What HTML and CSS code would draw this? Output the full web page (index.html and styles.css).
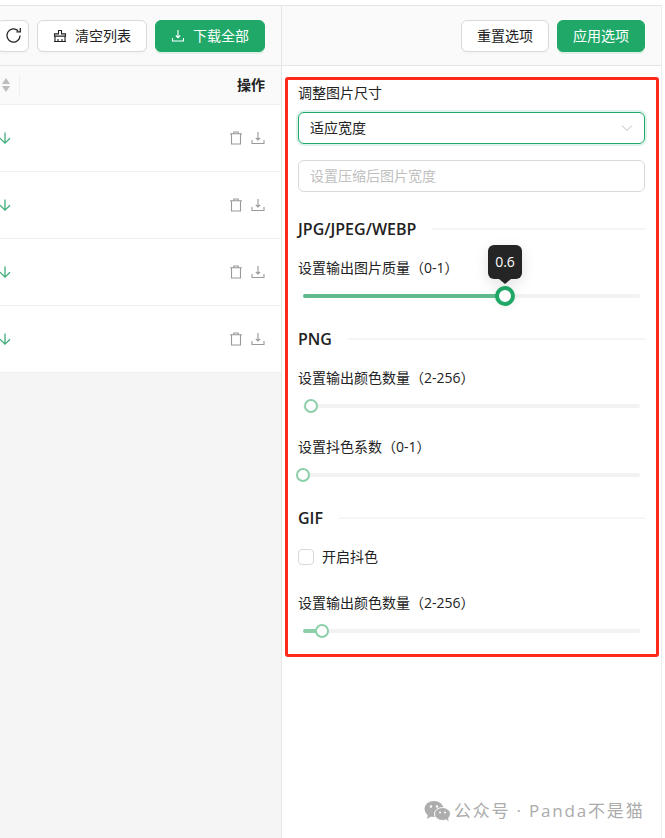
FILE: index.html
```html
<!DOCTYPE html>
<html lang="zh-CN">
<head>
<meta charset="utf-8">
<title>图片压缩</title>
<link rel="stylesheet" href="styles.css">
</head>
<body>
<div class="app">
  <section class="left">
    <div class="toolbar">
      <button class="btn icon-btn"><svg width="17" height="17" viewBox="0 0 16 16" class="ico"><path d="M14.200 8a6.200 6.200 0 1 1-1.900-4.500" fill="none" stroke="#222" stroke-width="1.200"/><path d="M14.400 .9v3.700h-3.700" fill="none" stroke="#222" stroke-width="1.200"/></svg></button>
      <button class="btn"><svg width="14" height="14" viewBox="0 0 14 14" class="ico"><path d="M5.500 1.500h3v3.400h4v2.200h-11V4.900h4zM2 7.100v5.400h10V7.100M1 12.500h12M5 10v2.500M9 10v2.500" fill="none" stroke="#222" stroke-width="1.100"/></svg>清空列表</button>
      <button class="btn primary"><svg width="14" height="14" viewBox="0 0 14 14" class="ico"><path d="M7 1v7.500M4.800 6.500 7 8.700l2.200-2.200M1.500 9v3h11V9" fill="none" stroke="#fff" stroke-width="1.100"/></svg>下载全部</button>
    </div>
    <div class="thead">
      <div class="sort"><span class="up"></span><span class="down"></span></div>
      <div class="th-sep"></div>
      <div class="th-action">操作</div>
    </div>
    <div class="row"><svg class="status" width="14" height="14" viewBox="0 0 14 14"><path d="M7 1.500v10.500M2 7.200 7 12.200l5-5" fill="none" stroke="#3fae7a" stroke-width="1.300"/></svg><div class="actions"><svg width="14" height="14" viewBox="0 0 14 14"><path d="M1 2.800h12M4.800 2.800V1h4.400v1.800M2.500 2.800v10.200h9V2.800" fill="none" stroke="#999" stroke-width="1.100"/></svg><svg width="14" height="14" viewBox="0 0 14 14"><path d="M7 1v8M4.800 6.800 7 9l2.200-2.200M1 9v3.500h12V9" fill="none" stroke="#999" stroke-width="1.100"/></svg></div></div>
    <div class="row"><svg class="status" width="14" height="14" viewBox="0 0 14 14"><path d="M7 1.500v10.500M2 7.200 7 12.200l5-5" fill="none" stroke="#3fae7a" stroke-width="1.300"/></svg><div class="actions"><svg width="14" height="14" viewBox="0 0 14 14"><path d="M1 2.800h12M4.800 2.800V1h4.400v1.800M2.500 2.800v10.200h9V2.800" fill="none" stroke="#999" stroke-width="1.100"/></svg><svg width="14" height="14" viewBox="0 0 14 14"><path d="M7 1v8M4.800 6.800 7 9l2.200-2.200M1 9v3.500h12V9" fill="none" stroke="#999" stroke-width="1.100"/></svg></div></div>
    <div class="row"><svg class="status" width="14" height="14" viewBox="0 0 14 14"><path d="M7 1.500v10.500M2 7.200 7 12.200l5-5" fill="none" stroke="#3fae7a" stroke-width="1.300"/></svg><div class="actions"><svg width="14" height="14" viewBox="0 0 14 14"><path d="M1 2.800h12M4.800 2.800V1h4.400v1.800M2.500 2.800v10.200h9V2.800" fill="none" stroke="#999" stroke-width="1.100"/></svg><svg width="14" height="14" viewBox="0 0 14 14"><path d="M7 1v8M4.800 6.800 7 9l2.200-2.200M1 9v3.500h12V9" fill="none" stroke="#999" stroke-width="1.100"/></svg></div></div>
    <div class="row"><svg class="status" width="14" height="14" viewBox="0 0 14 14"><path d="M7 1.500v10.500M2 7.200 7 12.200l5-5" fill="none" stroke="#3fae7a" stroke-width="1.300"/></svg><div class="actions"><svg width="14" height="14" viewBox="0 0 14 14"><path d="M1 2.800h12M4.800 2.800V1h4.400v1.800M2.500 2.800v10.200h9V2.800" fill="none" stroke="#999" stroke-width="1.100"/></svg><svg width="14" height="14" viewBox="0 0 14 14"><path d="M7 1v8M4.800 6.800 7 9l2.200-2.200M1 9v3.500h12V9" fill="none" stroke="#999" stroke-width="1.100"/></svg></div></div>
  </section>
  <section class="right">
    <div class="toolbar">
      <button class="btn narrow">重置选项</button>
      <button class="btn primary narrow">应用选项</button>
    </div>
    <div class="form">
      <div class="label">调整图片尺寸</div>
      <div class="field select"><span>适应宽度</span><svg width="12" height="12" viewBox="0 0 12 12"><path d="M1 3.500 6 8.500l5-5" fill="none" stroke="#bbb" stroke-width="1"/></svg></div>
      <div class="field placeholder">设置压缩后图片宽度</div>
      <div class="divider first"><span>JPG/JPEG/WEBP</span></div>
      <div class="label">设置输出图片质量（0-1）</div>
      <div class="slider"><div class="fill strong" style="width:202px"></div><div class="handle active" style="left:202px"><div class="tip">0.6</div></div></div>
      <div class="divider"><span>PNG</span></div>
      <div class="label">设置输出颜色数量（2-256）</div>
      <div class="slider"><div class="handle" style="left:8px"></div></div>
      <div class="label gap">设置抖色系数（0-1）</div>
      <div class="slider"><div class="handle" style="left:0"></div></div>
      <div class="divider"><span>GIF</span></div>
      <label class="check"><span class="box"></span>开启抖色</label>
      <div class="label gap-c">设置输出颜色数量（2-256）</div>
      <div class="slider"><div class="fill" style="width:19px"></div><div class="handle" style="left:19px"></div></div>
    </div>
  </section>
</div>
<div class="frame"></div>
<div class="watermark"><svg width="27" height="22" viewBox="0 0 27 22"><ellipse cx="10" cy="9" rx="9.500" ry="8" fill="#adadad"/><path d="M4 14l-1 5 5-3z" fill="#adadad"/><ellipse cx="18.500" cy="14" rx="8" ry="6.500" fill="#adadad" stroke="#fff" stroke-width="1"/><path d="M22 19l2.500 2.500-.5-4z" fill="#adadad"/><circle cx="7" cy="6.500" r="1.200" fill="#fff"/><circle cx="13" cy="6.500" r="1.200" fill="#fff"/><circle cx="16" cy="12.500" r="1" fill="#fff"/><circle cx="21" cy="12.500" r="1" fill="#fff"/></svg><span>公众号 · Panda不是猫</span></div>
</body>
</html>
```

FILE: styles.css
```css
* { box-sizing: border-box; }
html, body { margin: 0; height: 100%; }
body {
  background: #fff;
  color: #222;
  font: 14px/22px "Open Sans", "Noto Sans CJK SC", sans-serif;
  overflow: hidden;
}
.app {
  display: flex;
  height: 838px;
  padding-top: 5px;
  width: 662px;
}
.left {
  width: 282px;
  flex: none;
  background: #f5f5f5;
  border-right: 1px solid #e5e5e5;
  border-top: 1px solid #e5e5e5;
  overflow: hidden;
}
.right {
  flex: 1;
  background: #fff;
  border-right: 1px solid #eee;
  border-top: 1px solid #e5e5e5;
}
.toolbar {
  height: 60px;
  display: flex;
  justify-content: flex-end;
  align-items: center;
  gap: 8px;
  padding-right: 16px;
  background: #fafafa;
  border-bottom: 1px solid #e5e5e5;
}
.btn {
  flex: none;
  width: 110px;
  height: 32px;
  display: flex;
  align-items: center;
  justify-content: center;
  padding: 0;
  background: #fff;
  border: 1px solid #d9d9d9;
  border-radius: 6px;
  color: #222;
  font: inherit;
  box-shadow: 0 2px 0 rgba(0, 0, 0, .02);
}
.btn.narrow { width: 88px; }
.btn.icon-btn { width: 32px; }
.btn .ico { margin-right: 8px; }
.btn.icon-btn .ico { margin: 0; }
.btn.primary {
  background: #1fa868;
  border-color: #1fa868;
  color: #fff;
  box-shadow: 0 2px 0 rgba(31, 168, 104, .12);
}
.thead {
  height: 39px;
  display: flex;
  align-items: center;
  padding-right: 16px;
  background: #fafafa;
  border-bottom: 1px solid #f0f0f0;
}
.sort {
  width: 19px;
  display: flex;
  flex-direction: column;
  align-items: flex-start;
  gap: 2px;
  padding-left: 2px;
}
.up, .down { width: 0; height: 0; border-left: 4.500px solid transparent; border-right: 4.500px solid transparent; }
.up { border-bottom: 6px solid #bdbdbd; }
.down { border-top: 6px solid #bdbdbd; }
.th-sep { width: 1px; height: 22px; background: #f0f0f0; }
.th-action { margin-left: auto; font-weight: 700; }
.row {
  height: 67px;
  display: flex;
  align-items: center;
  justify-content: space-between;
  padding: 0 16px 0 0;
  background: #fff;
  border-bottom: 1px solid #f0f0f0;
}
.status { margin-left: -2px; }
.actions { display: flex; gap: 8px; }
.form { padding: 16px 16px 0; }
.form > .label { height: 22px; }
.field {
  height: 32px;
  margin-top: 8px;
  padding: 0 11px;
  display: flex;
  align-items: center;
  border: 1px solid #d9d9d9;
  border-radius: 6px;
}
.select {
  justify-content: space-between;
  border-color: #1fa868;
  box-shadow: 0 0 0 2px rgba(31, 168, 104, .14);
}
.placeholder { margin-top: 16px; color: #bfbfbf; }
.divider {
  display: flex;
  align-items: center;
  gap: 16px;
  height: 22px;
  margin: 30px 0 17px;
  font-size: 16px;
  font-weight: 600;
}
.divider.first { margin-top: 26px; }
.divider::after { content: ""; flex: 1; height: 2px; background: #f5f5f5; }
.slider {
  position: relative;
  height: 4px;
  margin: 15px 5px 0;
  background: #f2f2f2;
  border-radius: 2px;
}
.fill { height: 4px; border-radius: 2px; background: #8ccfa9; }
.fill.strong { background: #5fbb8d; }
.handle {
  position: absolute;
  top: 2px;
  width: 14px;
  height: 14px;
  margin: -7px 0 0 -7px;
  background: #fff;
  border: 2px solid #8ccfa9;
  border-radius: 50%;
}
.handle.active {
  width: 20px;
  height: 20px;
  margin: -10px 0 0 -10px;
  border: 4px solid #1fa868;
  box-shadow: 0 0 8px rgba(0, 0, 0, .08);
}
.tip {
  position: absolute;
  left: 50%;
  bottom: 23px;
  width: 34px;
  height: 34px;
  margin-left: -17px;
  background: #252525;
  border-radius: 6px;
  color: #fff;
  text-align: center;
  line-height: 34px;
  box-shadow: 0 4px 14px rgba(0, 0, 0, .12);
}
.tip::after {
  content: "";
  position: absolute;
  left: 50%;
  top: 34px;
  margin-left: -6px;
  border-left: 6px solid transparent;
  border-right: 6px solid transparent;
  border-top: 5px solid #252525;
}
.label.gap { margin-top: 28px; }
.label.gap-c { margin-top: 24px; }
.check { display: flex; align-items: center; gap: 8px; height: 22px; }
.box { width: 16px; height: 16px; border: 1px solid #d9d9d9; border-radius: 4px; background: #fff; }
.frame {
  position: absolute;
  left: 285px;
  top: 77px;
  width: 374px;
  height: 580px;
  border: 3px solid #ff2a1a;
  border-radius: 3px;
  pointer-events: none;
}
.watermark {
  position: absolute;
  left: 424px;
  top: 800px;
  display: flex;
  align-items: center;
  gap: 3px;
  color: #ababab;
  font-size: 17px;
  letter-spacing: 1.800px;
  white-space: nowrap;
}
```
